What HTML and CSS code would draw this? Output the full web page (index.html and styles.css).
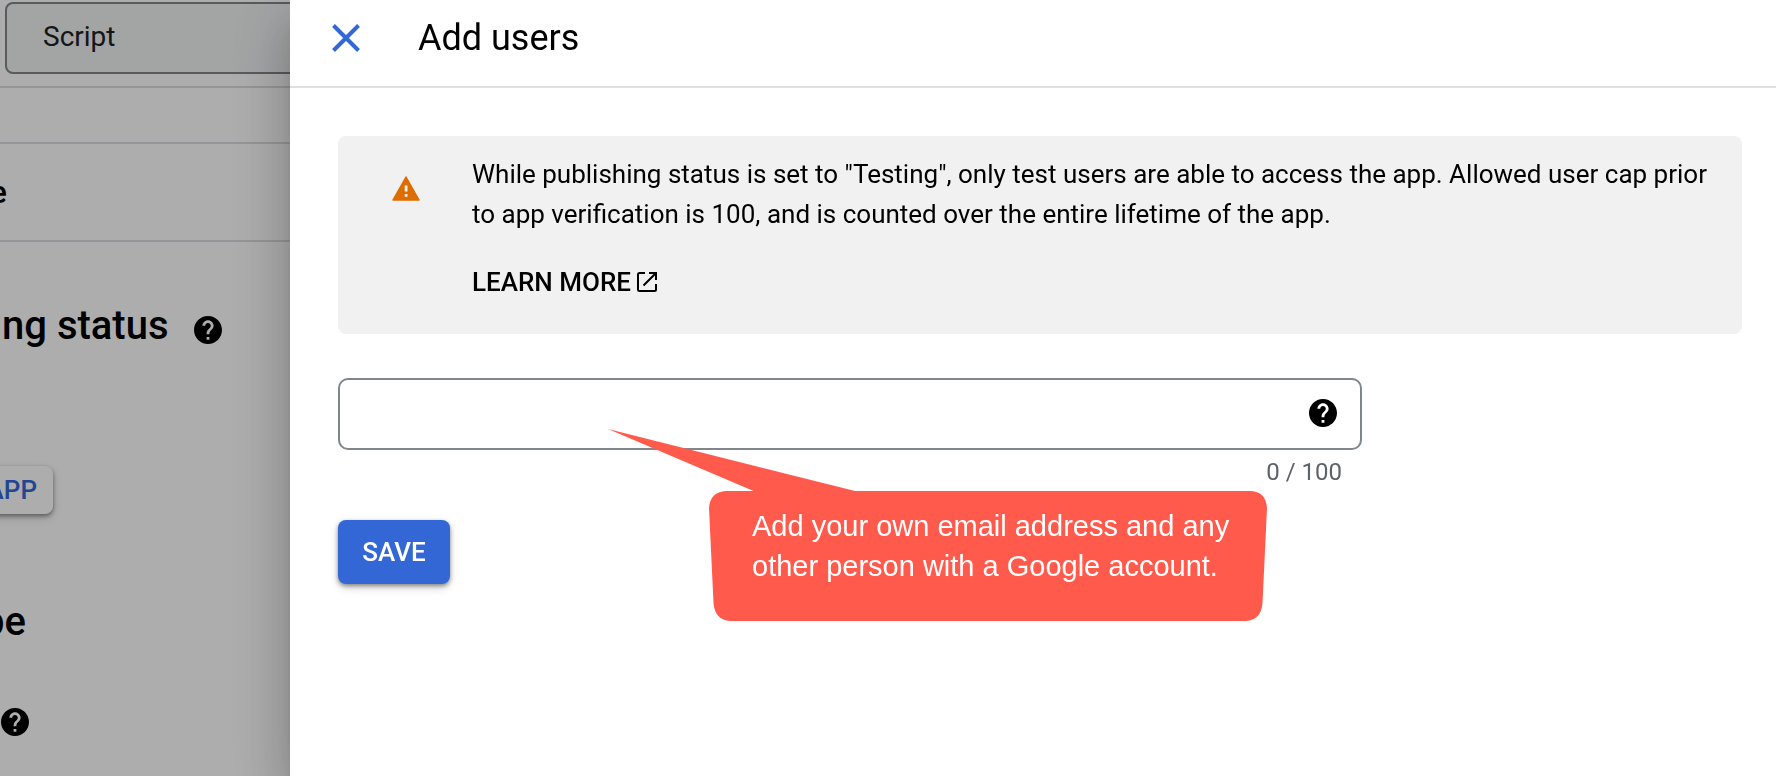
FILE: index.html
```html
<!DOCTYPE html>
<html lang="en">
<head>
<meta charset="utf-8">
<meta name="viewport" content="width=device-width, initial-scale=1">
<title>Add users</title>
<link rel="stylesheet" href="styles.css">
</head>
<body>
<svg class="symbols" aria-hidden="true">
  <symbol id="help" viewBox="2 2 20 20">
    <path fill-rule="evenodd" d="M12 2C6.48 2 2 6.48 2 12s4.48 10 10 10 10-4.480 10-10S17.520 2 12 2zm1 17h-2v-2h2v2zm2.070-7.750l-.9.920C13.450 12.900 13 13.500 13 15h-2v-.5c0-1.100.450-2.100 1.170-2.830l1.240-1.260c.370-.360.590-.860.590-1.410 0-1.100-.9-2-2-2s-2 .9-2 2H8c0-2.210 1.790-4 4-4s4 1.790 4 4c0 .880-.360 1.680-.930 2.250z"/>
  </symbol>
</svg>

<div class="page">
  <header class="page-header">
    <button class="page-search" type="button">Script</button>
  </header>
  <div class="page-strip"></div>
  <div class="page-title"><h1 class="edge edge-title">e</h1></div>
  <main class="page-main">
    <div class="status">
      <h2 class="heading">ng status</h2>
      <svg class="help" role="img" aria-label="Help"><use href="#help"/></svg>
    </div>
    <button class="app-button" type="button">APP</button>
    <h2 class="heading edge edge-type">pe</h2>
    <svg class="help" role="img" aria-label="Help"><use href="#help"/></svg>
  </main>
</div>
<div class="scrim"></div>

<section class="drawer" role="dialog" aria-labelledby="drawer-title">
  <header class="drawer-header">
    <button class="close" type="button" aria-label="Close">
      <svg viewBox="0 0 28 28"><path d="M1.500 1.500L26.500 26.500M26.500 1.500L1.500 26.500"/></svg>
    </button>
    <h2 class="drawer-title" id="drawer-title">Add users</h2>
  </header>
  <div class="drawer-body">
    <div class="notice">
      <svg class="warning" viewBox="0 0 28 25" role="img" aria-label="Warning">
        <path class="warning-shape" d="M14 1L27 24H1z"/>
        <path class="warning-mark" d="M12.700 9.500h2.800v6h-2.800zM12.700 18h2.800v2.800h-2.800z"/>
      </svg>
      <div class="notice-text">
        <p>While publishing status is set to "Testing", only test users are able to access the app. Allowed user cap prior to app verification is 100, and is counted over the entire lifetime of the app.</p>
        <a class="learn" href="#">LEARN MORE<svg viewBox="0 0 20 20" aria-hidden="true"><path d="M8 1H2.500Q1 1 1 2.500V17.500Q1 19 2.500 19H17.500Q19 19 19 17.500V12M12 1H19V8M19 1L6.500 13.500"/></svg></a>
      </div>
    </div>
    <form class="form">
      <div class="field">
        <input class="field-input" type="text" aria-label="Users" aria-describedby="counter">
        <svg class="help" role="img" aria-label="Help"><use href="#help"/></svg>
      </div>
      <div class="counter" id="counter">0 / 100</div>
      <button class="save" type="button">SAVE</button>
      <aside class="callout">
        <svg class="callout-shape" viewBox="0 0 558 130" aria-hidden="true">
          <path d="M-101-62L146 0H542Q557 1 558 17L553.500 112Q552 129 537 130H21Q6 129 4.500 112L0 17Q1 1 17 0H44.500z"/>
        </svg>
        <p class="callout-text">Add your own email address and any<br>other person with a Google account.</p>
      </aside>
    </form>
  </div>
</section>
</body>
</html>
```

FILE: styles.css
```css
* {
  box-sizing: border-box;
}

body {
  margin: 0;
  min-height: 100vh;
  overflow: hidden;
  background: #fff;
  color: #000;
  font-family: Roboto, "Liberation Sans", sans-serif;
  font-size: 26px;
  line-height: 40px;
}

h1,
h2,
p {
  margin: 0;
}

button,
input {
  font: inherit;
}

.symbols {
  position: absolute;
  width: 0;
  height: 0;
}

.help {
  display: block;
  flex: none;
  width: 28px;
  height: 28px;
}

/* Page behind the drawer */

.page-header {
  height: 88px;
  padding: 2px 0 0 5px;
  border-bottom: 2px solid #dadce0;
}

.page-search {
  display: block;
  width: 100%;
  height: 72px;
  padding: 0 36px 2px;
  border: 2px solid #80868b;
  border-radius: 8px;
  background: #f1f3f4;
  color: #202124;
  font-size: 28px;
  text-align: left;
}

.page-strip {
  height: 56px;
  border-bottom: 2px solid #dadce0;
}

.page-title {
  height: 98px;
  padding-top: 28px;
  border-bottom: 2px solid #dadce0;
}

.edge {
  display: flex;
  justify-content: flex-end;
}

.edge-title {
  width: 7px;
  font-size: 32px;
  font-weight: 500;
}

.edge-type {
  width: 25px;
}

.page-main {
  display: flex;
  flex-direction: column;
  align-items: flex-start;
  padding: 64px 1px 0;
}

.heading {
  font-size: 40px;
  font-weight: 500;
}

.status {
  display: flex;
  align-items: flex-end;
  gap: 25px;
  padding-left: 1px;
}

.status .help {
  margin-bottom: 2px;
}

.app-button {
  display: flex;
  align-items: center;
  justify-content: flex-end;
  width: 72px;
  height: 48px;
  margin: 120px 0 88px -20px;
  padding: 0 16px 0 0;
  border: 0;
  border-radius: 8px;
  background: #fff;
  box-shadow: 0 2px 4px rgba(0, 0, 0, .4), 0 4px 10px rgba(0, 0, 0, .15);
  color: #3367d6;
  font-weight: 500;
}

.page-main > .help {
  margin-top: 66px;
}

.scrim {
  position: fixed;
  inset: 0;
  background: rgba(0, 0, 0, .32);
}

/* Drawer */

.drawer {
  position: fixed;
  inset: 0 0 0 290px;
  background: #fff;
  box-shadow: 0 16px 20px -10px rgba(0, 0, 0, .2), 0 32px 48px 4px rgba(0, 0, 0, .14), 0 12px 60px 10px rgba(0, 0, 0, .12);
}

.drawer-header {
  display: flex;
  align-items: center;
  gap: 58px;
  height: 88px;
  padding: 0 42px 10px;
  border-bottom: 2px solid #e0e0e0;
}

.close {
  width: 28px;
  height: 28px;
  padding: 0;
  border: 0;
  background: none;
}

.close svg {
  display: block;
  fill: none;
  stroke: #3367d6;
  stroke-width: 4;
}

.drawer-title {
  font-size: 36px;
  font-weight: 400;
}

.drawer-body {
  padding: 48px 34px 0 48px;
}

.notice {
  display: flex;
  gap: 52px;
  padding: 18px 32px 32px 54px;
  border-radius: 8px;
  background: #f1f1f1;
}

.warning {
  flex: none;
  width: 28px;
  height: 25px;
  margin-top: 22px;
}

.warning-shape {
  fill: #de6c00;
  stroke: #de6c00;
  stroke-width: 1.500;
  stroke-linejoin: round;
}

.warning-mark {
  fill: #f1f1f1;
}

.learn {
  display: inline-flex;
  align-items: center;
  gap: 6px;
  margin-top: 28px;
  color: #000;
  font-weight: 500;
  text-decoration: none;
}

.learn svg {
  width: 20px;
  height: 20px;
  fill: none;
  stroke: #000;
  stroke-width: 2;
}

.form {
  position: relative;
  max-width: 1024px;
  margin-top: 44px;
}

.field {
  display: flex;
  align-items: center;
  height: 72px;
  padding: 0 23px 2px;
  border: 2px solid #80868b;
  border-radius: 10px;
}

.field-input {
  flex: 1;
  min-width: 0;
  padding: 0;
  border: 0;
  outline: 0;
  background: none;
}

.counter {
  padding: 2px 20px 0;
  color: #5f6368;
  font-size: 24px;
  text-align: right;
}

.save {
  display: block;
  min-width: 112px;
  height: 64px;
  margin-top: 28px;
  padding: 0 24px;
  border: 0;
  border-radius: 8px;
  background: #3367d6;
  box-shadow: 0 2px 4px rgba(0, 0, 0, .4), 0 4px 10px rgba(0, 0, 0, .15);
  color: #fff;
  font-weight: 500;
}

/* Annotation over the form */

.callout {
  position: absolute;
  top: 113px;
  left: 371px;
  width: 558px;
  height: 130px;
  padding: 15px 0 0 43px;
}

.callout-shape {
  position: absolute;
  inset: 0;
  overflow: visible;
  fill: #ff5a4c;
}

.callout-text {
  position: relative;
  color: #fff;
  font-family: "Liberation Sans", Arial, sans-serif;
  font-size: 29px;
  white-space: nowrap;
}
```
